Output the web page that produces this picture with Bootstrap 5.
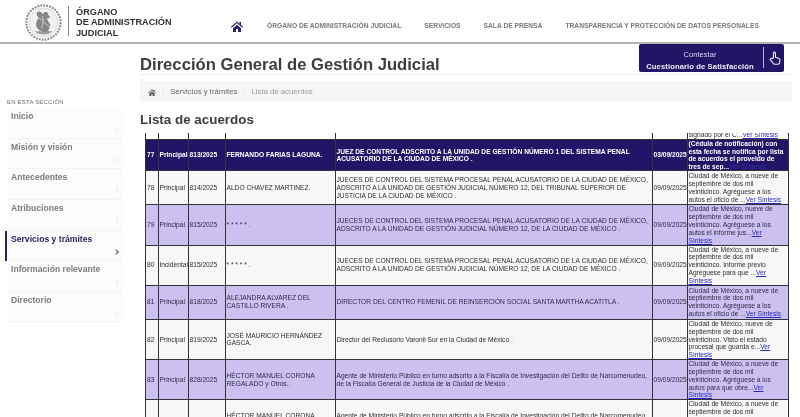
<!DOCTYPE html>
<html lang="es">
<head>
<meta charset="utf-8">
<title>Lista de acuerdos</title>
<link rel="stylesheet" href="https://cdn.jsdelivr.net/npm/bootstrap@5.3.0/dist/css/bootstrap.min.css">
<style>
html,body{height:417px;overflow:hidden;background:#fff;font-family:"Liberation Sans",Arial,sans-serif;color:#444}
body{filter:blur(.3px)}
.site-head{height:44px;border-bottom:2px solid #b5b5b5;padding:0 0 0 25px;align-items:flex-start;flex-wrap:nowrap;justify-content:flex-start}
.seal{width:37px;height:37px;margin-top:4px;flex:none}
.brand-txt{margin:6px 0 0 6px;padding-left:7px;border-left:1px solid #888;height:30px;font-size:9.2px;line-height:10.6px;color:#333;font-weight:bold;flex:none;width:100px}
.brand-txt span{display:block;white-space:nowrap;position:relative;top:.5px}
.top-nav{margin-left:63px;margin-top:19px;gap:23px;align-items:center;flex-wrap:nowrap}
.top-nav a{font-size:6.7px;font-weight:bold;color:#787878;text-transform:uppercase;letter-spacing:0;white-space:nowrap;padding:0;line-height:14px}
.top-nav .home-lnk{margin-right:1px}
.home-ic{width:12px;height:11px;display:block;fill:#2d2262}
.page-wrap{align-items:flex-start}
.side-col{width:115px;margin-left:7px;margin-top:54px;flex:none}
.side-head{font-size:6px;color:#6c6c6c;letter-spacing:.2px;line-height:8px;margin-bottom:2px}
.side-list{border-radius:0}
.side-list .list-group-item{height:30.7px;padding:2px 4px;background:#fcfcfc;border:0;border-bottom:1px solid #f4f4f4;font-size:8.6px;font-weight:bold;color:#7c7c7c;line-height:13px;position:relative;white-space:nowrap}
.side-list .list-group-item::after{content:"";position:absolute;right:4px;top:19px;width:4px;height:4px;border-top:1px solid #eee;border-right:1px solid #eee;transform:rotate(45deg)}
.side-list .list-group-item.on-item{color:#2b2360;background:#fcfcfc;box-shadow:-2px 0 0 0 #2b2360}
.side-list .list-group-item.on-item::after{border-color:#555}
.main-col{margin-left:18px;width:652px;flex:none}
.title-row{height:31px;border-bottom:1px solid #eee;padding-right:8px;align-items:flex-end;justify-content:space-between}
.title-row h1{font-size:16.65px;font-weight:bold;color:#3e3e3e;margin:0;line-height:18px}
.survey-btn{width:145px;height:28px;margin-bottom:2px;background:#241467;border-radius:2px;color:#d8d4ea;font-size:7.6px;line-height:11.5px;text-align:center;padding:5px 0 0 0;border:0;align-items:stretch;display:flex;flex:none}
.survey-txt{width:122px;flex:none}
.survey-txt b{display:block;font-size:7.6px;color:#eeecf6;letter-spacing:.12px}
.survey-ic{border-left:1px solid #b9b2d6;margin:-2px 0 3px 2px;padding:4px 0 0 4px;height:21px}
.survey-ic svg{width:14px;height:14px;display:block;fill:none;stroke:#eee;stroke-width:1.4}
.crumbs{margin:6px 0 0;height:21px;background:#f6f6f6;padding:0 8px;font-size:7.75px;align-items:center;border-radius:0}
.crumbs .breadcrumb-item{color:#9a9a9a;line-height:21px;padding-left:6px}
.crumbs .breadcrumb-item::before{color:#e2e2e2;padding-right:6px}
.crumbs .breadcrumb-item:first-child{padding-left:0}
.crumbs a{color:#666;text-decoration:none}
.crumbs svg{width:8px;height:7px;fill:#555;display:block;margin-top:1px}
.sub-title{font-size:13.4px;font-weight:bold;color:#3e3e3e;margin:9px 0 0;line-height:18px}
.acu-box{width:644px;margin:4px 0 0 5px}
.acu-table{table-layout:fixed;width:643px;margin:0;font-size:6.65px;line-height:7.85px;color:#2e2e2e;border-collapse:collapse;--bs-table-bg:transparent}
.acu-table td{border:1px solid #33333d;padding:0 1px;vertical-align:middle;overflow:hidden;background:#f7f7f7;color:#2e2e2e;box-shadow:none}
.c1{width:12.5px}.c2{width:30px}.c3{width:37px}.c4{width:110px}.c5{width:317px}.c6{width:35px}.c7{width:101.500px}
.acu-table tr.stub td{height:6px;border-top:0;border-bottom:0;background:#fff;padding:0 1px}
.stub-clip{height:6px;overflow:hidden;display:flex;align-items:flex-end}
.stub-clip p{margin:0;white-space:nowrap}
.acu-table tr.head-row td{background:#241467;color:#fff;font-weight:bold;height:31px;line-height:7.6px}
.acu-table tr.head-row td a{color:#2f2aa0}
.acu-table tr.alt td{background:#cbc0ef;color:#2f2a46}
.acu-table a{color:#2a2ac0}
.acu-table tr.h34 td{height:34px}.acu-table tr.h40 td{height:40px}
</style>
</head>
<body>
<nav class="navbar site-head d-flex">
  <svg class="seal" viewBox="0 0 40 40" aria-hidden="true">
    <circle cx="20" cy="20" r="18.5" fill="none" stroke="#8d8d8d" stroke-width="2.4" stroke-dasharray="2 1.2"/>
    <circle cx="20" cy="20" r="15.6" fill="#f1f1f1" stroke="#bdbdbd" stroke-width=".6"/>
    <path d="M13 9c3-2 5 0 6 2l2-2c3-1 5 1 4 3l2 2c-1 2-3 2-4 1l3 5c2 3 1 6-1 8l2 3-4-1-3 1-3-2c-3-1-5-4-5-7 0-3 1-5 3-7-2-2-3-4-2-6z" fill="#868686"/>
    <path d="M10 29c3 3 6 4 10 4s7-1 10-4c-3 1-5 1-6 0-3 2-6 2-8 0-2 1-4 1-6 0z" fill="#9a9a9a"/>
    <path d="M15 15c3 2 7 7 12 10M19 13c1 4 1 8-1 13" stroke="#d8d8d8" stroke-width=".9" fill="none"/>
  </svg>
  <div class="brand-txt"><span>ÓRGANO</span><span>DE ADMINISTRACIÓN</span><span>JUDICIAL</span></div>
  <div class="nav top-nav">
    <a class="nav-link home-lnk" href="#" aria-label="Inicio"><svg class="home-ic" viewBox="0 0 24 22"><path d="M12 1 0 11.5l1.6 1.800L12 4.200l10.400 9.100 1.600-1.800-4-3.500V2h-3v3.600zM4 14.500V22h6v-6h4v6h6v-7.500L12 7.500z"/></svg></a>
    <a class="nav-link" href="#">Órgano de Administración Judicial</a>
    <a class="nav-link" href="#">Servicios</a>
    <a class="nav-link" href="#">Sala de Prensa</a>
    <a class="nav-link" href="#">Transparencia y Protección de Datos Personales</a>
  </div>
</nav>
<div class="d-flex page-wrap">
  <aside class="side-col">
    <div class="side-head">EN ESTA SECCIÓN</div>
    <div class="list-group side-list">
      <a class="list-group-item" href="#">Inicio</a>
      <a class="list-group-item" href="#">Misión y visión</a>
      <a class="list-group-item" href="#">Antecedentes</a>
      <a class="list-group-item" href="#">Atribuciones</a>
      <a class="list-group-item on-item" href="#">Servicios y trámites</a>
      <a class="list-group-item" href="#">Información relevante</a>
      <a class="list-group-item" href="#">Directorio</a>
    </div>
  </aside>
  <main class="main-col">
    <div class="d-flex title-row">
      <h1>Dirección General de Gestión Judicial</h1>
      <button class="survey-btn" type="button">
        <span class="survey-txt">Contestar<b>Cuestionario de Satisfacción</b></span>
        <span class="survey-ic"><svg viewBox="0 0 16 18"><path d="M6 9V3c0-2 2.6-2 2.6 0v5.200l4 1c1.500.4 2 1.300 1.800 2.800l-.5 3c-.2 1.200-1 2-2.200 2H8c-1 0-1.800-.5-2.400-1.300L2 11.500c-.9-1.400.8-2.800 2-1.700z"/></svg></span>
      </button>
    </div>
    <ol class="breadcrumb crumbs d-flex">
      <li class="breadcrumb-item"><a href="#" aria-label="Inicio"><svg viewBox="0 0 24 22"><path d="M12 1 0 11.5l1.600 1.800L12 4.200l10.400 9.100 1.600-1.800-4-3.500V2h-3v3.600zM4 14.500V22h6v-6h4v6h6v-7.500L12 7.500z"/></svg></a></li>
      <li class="breadcrumb-item"><a href="#">Servicios y trámites</a></li>
      <li class="breadcrumb-item active">Lista de acuerdos</li>
    </ol>
    <h2 class="sub-title">Lista de acuerdos</h2>
    <div class="acu-box">
      <table class="table acu-table">
        <colgroup><col class="c1"><col class="c2"><col class="c3"><col class="c4"><col class="c5"><col class="c6"><col class="c7"></colgroup>
        <tbody>
          <tr class="stub"><td></td><td></td><td></td><td></td><td></td><td></td><td><div class="stub-clip"><p>signado por el C...<a href="#">Ver Síntesis</a></p></div></td></tr>
          <tr class="head-row"><td>77</td><td>Principal</td><td>813/2025</td><td>FERNANDO FARIAS LAGUNA.</td><td>JUEZ DE CONTROL ADSCRITO A LA UNIDAD DE GESTIÓN NÚMERO 1 DEL SISTEMA PENAL ACUSATORIO DE LA CIUDAD DE MÉXICO .</td><td>03/09/2025</td><td>(Cédula de notificación) con esta fecha se notifica por lista de acuerdos el proveido de tres de sep...<a href="#">Ver Síntesis</a></td></tr>
          <tr class="h34"><td>78</td><td>Principal</td><td>814/2025</td><td>ALDO CHAVEZ MARTINEZ.</td><td>JUECES DE CONTROL DEL SISTEMA PROCESAL PENAL ACUSATORIO DE LA CIUDAD DE MÉXICO, ADSCRITO A LA UNIDAD DE GESTIÓN JUDICIAL NÚMERO 12, DEL TRIBUNAL SUPERIOR DE JUSTICIA DE LA CIUDAD DE MÉXICO .</td><td>09/09/2025</td><td>Ciudad de México, a nueve de septiembre de dos mil veinticinco. Agréguese a los autos el oficio de ...<a href="#">Ver Síntesis</a></td></tr>
          <tr class="alt h40"><td>79</td><td>Principal</td><td>815/2025</td><td>* * * * * .</td><td>JUECES DE CONTROL DEL SISTEMA PROCESAL PENAL ACUSATORIO DE LA CIUDAD DE MÉXICO, ADSCRITO A LA UNIDAD DE GESTIÓN JUDICIAL NÚMERO 12, DE LA CIUDAD DE MÉXICO .</td><td>09/09/2025</td><td>Ciudad de México, nueve de septiembre de dos mil veinticinco. Agréguese a los autos el informe jus...<a href="#">Ver Síntesis</a></td></tr>
          <tr class="h40"><td>80</td><td>Incidental</td><td>815/2025</td><td>* * * * * .</td><td>JUECES DE CONTROL DEL SISTEMA PROCESAL PENAL ACUSATORIO DE LA CIUDAD DE MÉXICO, ADSCRITO A LA UNIDAD DE GESTIÓN JUDICIAL NÚMERO 12, DE LA CIUDAD DE MÉXICO .</td><td>09/09/2025</td><td>Ciudad de México, a nueve de septiembre de dos mil veinticinco. Informe previo Agréguese para que ...<a href="#">Ver Síntesis</a></td></tr>
          <tr class="alt h34"><td>81</td><td>Principal</td><td>818/2025</td><td>ALEJANDRA ALVAREZ DEL CASTILLO RIVERA .</td><td>DIRECTOR DEL CENTRO FEMENIL DE REINSERCIÓN SOCIAL SANTA MARTHA ACATITLA .</td><td>09/09/2025</td><td>Ciudad de México, a nueve de septiembre de dos mil veinticinco. Agréguese a los autos el oficio de ...<a href="#">Ver Síntesis</a></td></tr>
          <tr class="h40"><td>82</td><td>Principal</td><td>819/2025</td><td>JOSÉ MAURICIO HERNÁNDEZ GASCA.</td><td>Director del Reclusorio Varonil Sur en la Ciudad de México .</td><td>09/09/2025</td><td>Ciudad de México, nueve de septiembre de dos mil veinticinco. Visto el estado procesal que guarda e...<a href="#">Ver Síntesis</a></td></tr>
          <tr class="alt h40"><td>83</td><td>Principal</td><td>828/2025</td><td>HÉCTOR MANUEL CORONA REGALADO y Otros..</td><td>Agente de Ministerio Público en turno adscrito a la Fiscalía de Investigación del Delito de Narcomenudeo, de la Fiscalía General de Justicia de la Ciudad de México .</td><td>09/09/2025</td><td>Ciudad de México, a nueve de septiembre de dos mil veinticinco. Agréguese a los autos para que obre...<a href="#">Ver Síntesis</a></td></tr>
          <tr class="h40"><td>84</td><td>Incidental</td><td>828/2025</td><td>HÉCTOR MANUEL CORONA REGALADO y Otros..</td><td>Agente de Ministerio Público en turno adscrito a la Fiscalía de Investigación del Delito de Narcomenudeo, de la Fiscalía General de Justicia de la Ciudad de México .</td><td>09/09/2025</td><td>Ciudad de México, a nueve de septiembre de dos mil veinticinco. Agréguese a los autos para que obre...<a href="#">Ver Síntesis</a></td></tr>
        </tbody>
      </table>
    </div>
  </main>
</div>
<script src="https://cdn.jsdelivr.net/npm/bootstrap@5.3.0/dist/js/bootstrap.bundle.min.js"></script>
</body>
</html>
